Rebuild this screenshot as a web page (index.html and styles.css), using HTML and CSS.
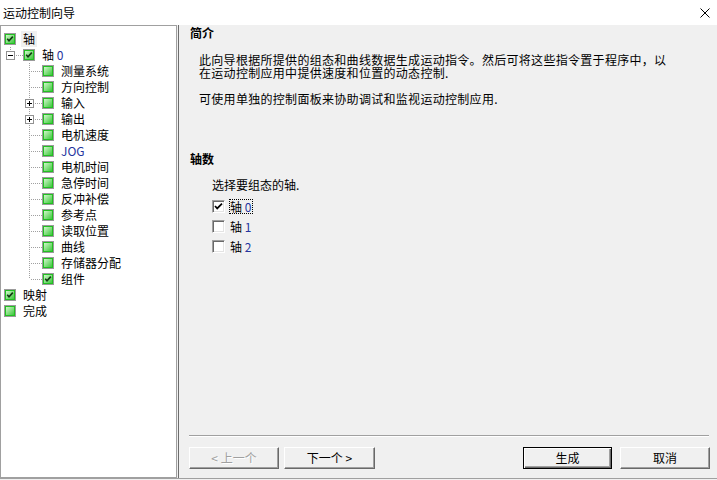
FILE: index.html
```html
<!DOCTYPE html>
<html lang="zh-CN">
<head>
<meta charset="utf-8">
<title>运动控制向导</title>
<link rel="stylesheet" href="styles.css">
</head>
<body>
<svg class="defs" width="0" height="0" aria-hidden="true">
  <defs>
    <linearGradient id="gg" x1="0" y1="0" x2="1" y2="1">
      <stop offset="0" stop-color="#d9fbd2"/>
      <stop offset="1" stop-color="#33c433"/>
    </linearGradient>
    <symbol id="ic" viewBox="0 0 12 12">
      <rect x="0.5" y="0.5" width="11" height="11" fill="#fff" stroke="#9a9a9a"/>
      <rect x="1.5" y="1.5" width="9" height="9" fill="url(#gg)" stroke="#22c022"/>
    </symbol>
    <symbol id="icc" viewBox="0 0 12 12">
      <rect x="0.5" y="0.5" width="11" height="11" fill="#fff" stroke="#9a9a9a"/>
      <rect x="1.5" y="1.5" width="9" height="9" fill="url(#gg)" stroke="#22c022"/>
      <path d="M3.2 5.8 L5 7.8 L8.8 3.6" fill="none" stroke="#123812" stroke-width="1.6"/>
    </symbol>
    <symbol id="minus" viewBox="0 0 9 9">
      <rect x="0.5" y="0.5" width="8" height="8" fill="#fff" stroke="#919191"/>
      <path d="M2 4.5 H7" stroke="#000"/>
    </symbol>
    <symbol id="plus" viewBox="0 0 9 9">
      <rect x="0.5" y="0.5" width="8" height="8" fill="#fff" stroke="#919191"/>
      <path d="M2 4.5 H7 M4.5 2 V7" stroke="#000"/>
    </symbol>
  </defs>
</svg>
<div class="window">
  <div class="titlebar">
    <span class="title">运动控制向导</span>
    <svg class="close" width="10" height="10" viewBox="0 0 10 10"><path d="M0.5 0.5 L9.5 9.5 M9.5 0.5 L0.5 9.5" stroke="#000" stroke-width="1"/></svg>
  </div>
  <div class="main">
    <div class="tree">
      <div class="row"><svg class="ic"><use href="#icc"/></svg><span class="t sel">轴</span></div>
      <div class="row"><span class="g corner"><svg class="exp"><use href="#minus"/></svg></span><svg class="ic"><use href="#icc"/></svg><span class="t">轴 <span class="num">0</span></span></div>
      <div class="row"><span class="g"></span><span class="g tee"></span><svg class="ic"><use href="#ic"/></svg><span class="t">测量系统</span></div>
      <div class="row"><span class="g"></span><span class="g tee"></span><svg class="ic"><use href="#ic"/></svg><span class="t">方向控制</span></div>
      <div class="row"><span class="g"></span><span class="g tee"><svg class="exp"><use href="#plus"/></svg></span><svg class="ic"><use href="#ic"/></svg><span class="t">输入</span></div>
      <div class="row"><span class="g"></span><span class="g tee"><svg class="exp"><use href="#plus"/></svg></span><svg class="ic"><use href="#ic"/></svg><span class="t">输出</span></div>
      <div class="row"><span class="g"></span><span class="g tee"></span><svg class="ic"><use href="#ic"/></svg><span class="t">电机速度</span></div>
      <div class="row"><span class="g"></span><span class="g tee"></span><svg class="ic"><use href="#ic"/></svg><span class="t num">JOG</span></div>
      <div class="row"><span class="g"></span><span class="g tee"></span><svg class="ic"><use href="#ic"/></svg><span class="t">电机时间</span></div>
      <div class="row"><span class="g"></span><span class="g tee"></span><svg class="ic"><use href="#ic"/></svg><span class="t">急停时间</span></div>
      <div class="row"><span class="g"></span><span class="g tee"></span><svg class="ic"><use href="#ic"/></svg><span class="t">反冲补偿</span></div>
      <div class="row"><span class="g"></span><span class="g tee"></span><svg class="ic"><use href="#ic"/></svg><span class="t">参考点</span></div>
      <div class="row"><span class="g"></span><span class="g tee"></span><svg class="ic"><use href="#ic"/></svg><span class="t">读取位置</span></div>
      <div class="row"><span class="g"></span><span class="g tee"></span><svg class="ic"><use href="#ic"/></svg><span class="t">曲线</span></div>
      <div class="row"><span class="g"></span><span class="g tee"></span><svg class="ic"><use href="#ic"/></svg><span class="t">存储器分配</span></div>
      <div class="row"><span class="g"></span><span class="g corner"></span><svg class="ic"><use href="#icc"/></svg><span class="t">组件</span></div>
      <div class="row"><svg class="ic"><use href="#icc"/></svg><span class="t">映射</span></div>
      <div class="row"><svg class="ic"><use href="#ic"/></svg><span class="t">完成</span></div>
    </div>
    <div class="splitter"></div>
    <div class="content">
      <div class="h">简介</div>
      <p class="para">此向导根据所提供的组态和曲线数据生成运动指令。然后可将这些指令置于程序中，以<br>在运动控制应用中提供速度和位置的动态控制.</p>
      <p class="para gap">可使用单独的控制面板来协助调试和监视运动控制应用.</p>
      <div class="h h2">轴数</div>
      <div class="prompt">选择要组态的轴.</div>
      <div class="checks">
        <div class="chk"><span class="box"><svg width="9" height="9" viewBox="0 0 9 9"><path d="M1 4 L3.2 6.4 L8 1.6" fill="none" stroke="#000" stroke-width="1.7"/></svg></span><span class="lbl focus">轴 <span class="num">0</span></span></div>
        <div class="chk"><span class="box"></span><span class="lbl">轴 <span class="num">1</span></span></div>
        <div class="chk"><span class="box"></span><span class="lbl">轴 <span class="num">2</span></span></div>
      </div>
      <div class="sep"></div>
      <div class="buttons">
        <div class="grp">
          <button class="btn" disabled>&lt; 上一个</button>
          <button class="btn next">下一个 &gt;</button>
        </div>
        <div class="grp right">
          <button class="btn default">生成</button>
          <button class="btn cancel">取消</button>
        </div>
      </div>
    </div>
  </div>
  <div class="bottomline"></div>
</div>
</body>
</html>
```

FILE: styles.css
```css
* { box-sizing: border-box; }
html, body { margin: 0; padding: 0; }
body {
  width: 717px;
  height: 480px;
  overflow: hidden;
  background: #f0f0f0;
  font-family: "Noto Sans CJK SC", "Liberation Sans", sans-serif;
  font-size: 12px;
  color: #000;
}
.defs { position: absolute; width: 0; height: 0; overflow: hidden; }
.window { display: flex; flex-direction: column; height: 480px; }

.titlebar {
  height: 25px;
  flex: none;
  background: #fff;
  display: flex;
  align-items: center;
  justify-content: space-between;
  padding: 0 7px 0 3px;
}
.title { line-height: 16px; }
.close { display: block; }

.main { display: flex; height: 453px; flex: none; }

.tree {
  width: 177px;
  flex: none;
  background: #fff;
  border: 1px solid #a0a0a0;
  padding: 5px 0 0 3px;
}
.row { display: flex; align-items: center; height: 16px; }
.g {
  width: 19px;
  height: 16px;
  flex: none;
  display: flex;
  align-items: center;
  padding-left: 2px;
}
.g.tee {
  background:
    repeating-linear-gradient(to bottom, #a0a0a0 0 1px, transparent 1px 2px) 6px 0 / 1px 16px no-repeat,
    repeating-linear-gradient(to right, #a0a0a0 0 1px, transparent 1px 2px) 8px 8px / 11px 1px no-repeat;
}
.g.corner {
  background:
    repeating-linear-gradient(to bottom, #a0a0a0 0 1px, transparent 1px 2px) 6px 0 / 1px 8px no-repeat,
    repeating-linear-gradient(to right, #a0a0a0 0 1px, transparent 1px 2px) 8px 8px / 11px 1px no-repeat;
}
.exp { width: 9px; height: 9px; display: block; }
.ic { width: 12px; height: 12px; flex: none; margin-right: 7px; display: block; }
.t { line-height: 16px; white-space: nowrap; }
.sel { background: #f0f0f0; padding: 0 2px; margin-left: -2px; }
.num { color: #24349e; }

.splitter { width: 1px; margin-left: 1px; background: #6d6d6d; flex: none; }

.content {
  flex: 1;
  display: flex;
  flex-direction: column;
  padding: 0 7px 9px 10px;
}
.h { font-weight: bold; line-height: 16px; margin-left: 1px; }
.para { margin: 12px 0 0 10px; line-height: 13px; white-space: nowrap; letter-spacing: 0.3px; }
.para.gap { margin-top: 13px; }
.h2 { margin-top: 46px; }
.prompt { margin: 10px 0 0 23px; line-height: 16px; }
.checks { margin: 3px 0 0 23px; }
.chk { display: flex; align-items: center; height: 20px; }
.box {
  width: 13px;
  height: 13px;
  flex: none;
  background: #fff;
  border: 1px solid;
  border-color: #a0a0a0 #fff #fff #a0a0a0;
  box-shadow: inset 1px 1px #696969, inset -1px -1px #e3e3e3;
  display: flex;
  align-items: center;
  justify-content: center;
  margin-right: 4px;
}
.box svg { display: block; }
.lbl { line-height: 13px; border: 1px dotted transparent; padding: 0 1px 0 0; }
.lbl.focus { border-color: #000; }

.sep {
  margin-top: auto;
  height: 2px;
  border-top: 1px solid #a0a0a0;
  border-bottom: 1px solid #fff;
  margin-right: 1px;
}
.buttons {
  margin-top: 10px;
  display: flex;
  justify-content: space-between;
}
.grp { display: flex; gap: 5px; }
.grp.right { gap: 8px; }
.btn {
  width: 90px;
  height: 22px;
  padding: 0;
  font: inherit;
  font-size: 12px;
  color: #000;
  background: #f0f0f0;
  border: 1px solid;
  border-color: #fff #696969 #696969 #fff;
  box-shadow: inset -1px -1px #a0a0a0;
  line-height: 18px;
}
.btn.next { width: 91px; }
.btn[disabled] { color: #a0a0a0; text-shadow: 1px 1px #fff; }
.btn.default {
  width: 89px;
  border-color: #000;
  box-shadow: inset 1px 1px #fff, inset -1px -1px #696969, inset -2px -2px #a0a0a0;
}

.bottomline { height: 2px; border-top: 1px solid #a0a0a0; flex: none; }
```
